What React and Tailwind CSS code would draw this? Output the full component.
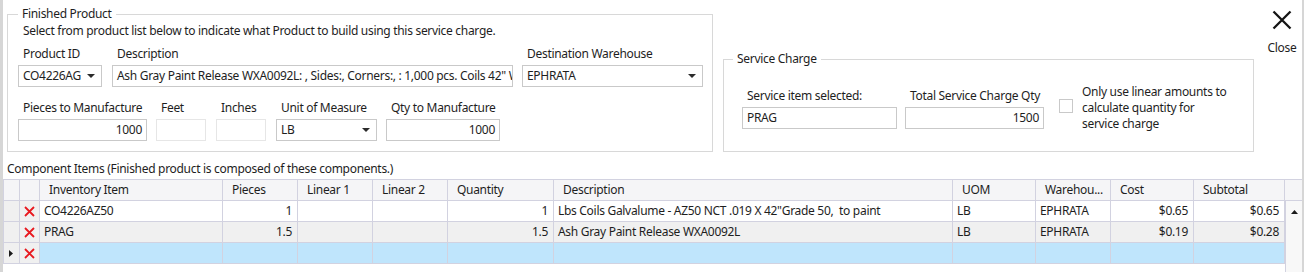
const lineColor = "border-[#d2d2e0]";

function Label({ children }) {
  return <div className="h-[16px] pl-[5px] leading-[16px] whitespace-nowrap">{children}</div>;
}

function TextBox({ width, value, right, disabled }) {
  return (
    <div
      className={`${width} mt-[3px] flex h-[22px] items-center overflow-hidden whitespace-nowrap border bg-white px-[4px] leading-[16px] ${
        disabled ? "border-[#e6e6e6]" : "border-[#c9c9c9]"
      } ${right ? "justify-end" : ""}`}
    >
      {value}
    </div>
  );
}

function ComboBox({ width, value }) {
  return (
    <div className={`${width} mt-[3px] flex h-[22px] items-center justify-between border border-[#c9c9c9] bg-white pl-[4px] pr-[6px] leading-[16px]`}>
      <span className="whitespace-nowrap">{value}</span>
      <svg width="8" height="4" viewBox="0 0 8 4">
        <path d="M0 0 L8 0 L4 4 Z" fill="#2b2b2b" />
      </svg>
    </div>
  );
}

function Field({ label, children, className = "" }) {
  return (
    <div className={`flex flex-col ${className}`}>
      <Label>{label}</Label>
      {children}
    </div>
  );
}

const columns = [
  { w: "w-[17px]", first: true },
  { w: "w-[20px]" },
  { w: "w-[183px]", title: "Inventory Item" },
  { w: "w-[75px]", title: "Pieces", right: true },
  { w: "w-[75px]", title: "Linear 1", right: true },
  { w: "w-[75px]", title: "Linear 2", right: true },
  { w: "w-[106px]", title: "Quantity", right: true },
  { w: "w-[399px]", title: "Description" },
  { w: "w-[83px]", title: "UOM" },
  { w: "w-[75px]", title: "Warehou..." },
  { w: "w-[83px]", title: "Cost", right: true },
  { w: "w-[91px]", title: "Subtotal", right: true },
];

const rows = [
  {
    bg: "bg-white",
    cells: ["CO4226AZ50", "1", "", "", "1", 'Lbs Coils Galvalume - AZ50 NCT .019 X 42"Grade 50,  to paint', "LB", "EPHRATA", "$0.65", "$0.65"],
  },
  {
    bg: "bg-[#f0f0f0]",
    cells: ["PRAG", "1.5", "", "", "1.5", "Ash Gray Paint Release WXA0092L", "LB", "EPHRATA", "$0.19", "$0.28"],
  },
  { bg: "bg-[#bfe5fc]", cells: ["", "", "", "", "", "", "", "", "", ""], current: true },
];

function RedX() {
  return (
    <svg width="11" height="11" viewBox="0 0 11 11">
      <path d="M1 1 L10 10 M10 1 L1 10" stroke="#e8191f" strokeWidth="1.8" />
    </svg>
  );
}

function HeaderRow() {
  return (
    <div className="flex h-[22px]">
      {columns.map((c, i) => (
        <div
          key={i}
          className={`${c.w} flex items-center border-y border-r ${lineColor} bg-[#f5f5f7] pl-[9px] whitespace-nowrap ${c.first ? "border-l" : ""}`}
        >
          {c.title}
        </div>
      ))}
    </div>
  );
}

function DataRow({ row }) {
  return (
    <div className="flex h-[21px]">
      <div className={`w-[17px] flex items-center border-b border-l border-r ${lineColor} bg-[#f0f0f0] pl-[5px]`}>
        {row.current && (
          <svg width="4" height="7" viewBox="0 0 4 7">
            <path d="M0 0 L4 3.5 L0 7 Z" fill="#1a1a1a" />
          </svg>
        )}
      </div>
      <div className={`w-[20px] flex items-center justify-center border-b border-r ${lineColor} bg-[#f0f0f0]`}>
        <RedX />
      </div>
      {row.cells.map((v, i) => {
        const c = columns[i + 2];
        return (
          <div
            key={i}
            className={`${c.w} flex items-center overflow-hidden whitespace-pre border-b border-r ${lineColor} ${row.bg} ${
              c.right ? "justify-end pr-[5px]" : "pl-[4px]"
            }`}
          >
            {v}
          </div>
        );
      })}
    </div>
  );
}

export default function App() {
  return (
    <div className="h-[272px] w-[1304px] overflow-hidden border-l-[3px] border-r-[2px] border-[#d6d6d6] bg-white font-['Noto_Sans',sans-serif] text-[12px] tracking-[-0.3px] text-[#1e1e1e]">
      <div className="flex items-start pt-[6px]">
        <fieldset className="ml-[4px] w-[706px] border border-[#d8d8d8] pb-[10px] pl-[10px]">
          <legend className="px-[4px] leading-[16px]">Finished Product</legend>
          <div className="mt-[1px] pl-[5px] leading-[16px]">
            Select from product list below to indicate what Product to build using this service charge.
          </div>
          <div className="mt-[7px] flex">
            <Field label="Product ID">
              <ComboBox width="w-[84px]" value="CO4226AG" />
            </Field>
            <Field label="Description" className="ml-[10px]">
              <TextBox width="w-[401px]" value={'Ash Gray Paint Release WXA0092L: , Sides:, Corners:, : 1,000 pcs. Coils 42" Wide'} />
            </Field>
            <Field label="Destination Warehouse" className="ml-[9px]">
              <ComboBox width="w-[181px]" value="EPHRATA" />
            </Field>
          </div>
          <div className="mt-[13px] flex">
            <Field label="Pieces to Manufacture">
              <TextBox width="w-[129px]" value="1000" right />
            </Field>
            <Field label="Feet" className="ml-[9px]">
              <TextBox width="w-[50px]" value="" disabled />
            </Field>
            <Field label="Inches" className="ml-[10px]">
              <TextBox width="w-[50px]" value="" disabled />
            </Field>
            <Field label="Unit of Measure" className="ml-[10px]">
              <ComboBox width="w-[101px]" value="LB" />
            </Field>
            <Field label="Qty to Manufacture" className="ml-[9px]">
              <TextBox width="w-[114px]" value="1000" right />
            </Field>
          </div>
        </fieldset>

        <fieldset className="ml-[10px] mt-[45px] w-[531px] border border-[#d8d8d8] pb-[19px] pl-[9px]">
          <legend className="px-[4px] leading-[16px]">Service Charge</legend>
          <div className="mt-[17px] flex items-start pl-[9px]">
            <Field label="Service item selected:" className="mt-[4px]">
              <TextBox width="w-[155px]" value="PRAG" />
            </Field>
            <Field label="Total Service Charge Qty" className="ml-[8px] mt-[4px]">
              <TextBox width="w-[139px]" value="1500" right />
            </Field>
            <div className="ml-[15px] mt-[15px] h-[14px] w-[14px] border border-[#c9c9c9] bg-white" />
            <div className="ml-[9px] leading-[16px]">
              Only use linear amounts to
              <br />
              calculate quantity for
              <br />
              service charge
            </div>
          </div>
        </fieldset>

        <div className="ml-[12px] flex w-[32px] flex-col items-center">
          <svg className="mt-[4px]" width="20" height="20" viewBox="0 0 20 20">
            <path d="M1.5 1.5 L18.5 18.5 M18.5 1.5 L1.5 18.5" stroke="#141414" strokeWidth="2.3" />
          </svg>
          <div className="mt-[10px] leading-[16px]">Close</div>
        </div>
      </div>

      <div className="ml-[4px] mt-[9px] leading-[16px]">
        Component Items (Finished product is composed of these components.)
      </div>

      <div className="mt-[2px] flex">
        <div className="flex flex-col">
          <HeaderRow />
          {rows.map((r, i) => (
            <DataRow key={i} row={r} />
          ))}
        </div>
        <div className="flex w-[17px] flex-col">
          <div className={`h-[22px] border-y ${lineColor} bg-[#f5f5f7]`} />
          <div className={`flex h-[80px] justify-center border-l ${lineColor} bg-[#f8f8f8] pt-[9px]`}>
            <svg width="7" height="4" viewBox="0 0 7 4">
              <path d="M0 4 L3.5 0 L7 4 Z" fill="#1a1a1a" />
            </svg>
          </div>
        </div>
      </div>
    </div>
  );
}
